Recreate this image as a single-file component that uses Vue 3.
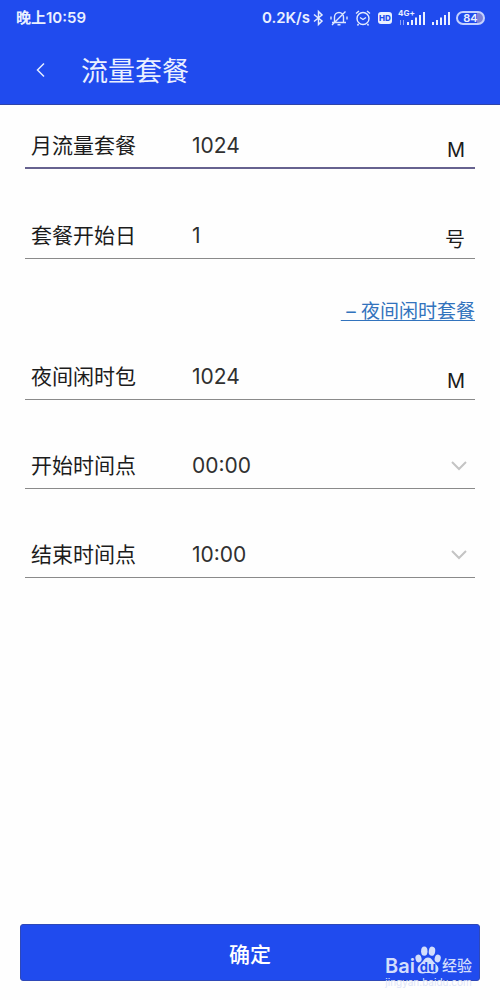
<script setup>
import { ref } from 'vue'

const monthly = ref('1024')
const startDay = ref('1')
const night = ref('1024')
const startTime = ref('00:00')
const endTime = ref('10:00')
const times = Array.from({ length: 24 }, (_, h) => `${String(h).padStart(2, '0')}:00`)
</script>

<template>
  <div class="page">
    <header class="top">
      <div class="status">
        <span class="clock">晚上10:59</span>
        <span class="speed">0.2K/s</span>
        <svg class="bt" width="11" height="18" viewBox="0 0 11 18" fill="none" stroke="#e4ecff" stroke-width="1.5">
          <path d="M1 5.500 9 12 5.500 15.500V2.500L9 6 1 12.500" />
        </svg>
        <svg class="mute" width="18" height="18" viewBox="0 0 18 18" fill="none" stroke="#dce6ff" stroke-width="1.4">
          <path d="M4.500 13V8a4.500 4.500 0 0 1 9 0v5M2 13.500h14M7.500 15.800h3M2 16 15.500 2.500M1 7.500v3M17 7.500v3" />
        </svg>
        <svg class="alarm" width="16" height="18" viewBox="0 0 16 18" fill="none" stroke="#e4ecff" stroke-width="1.4">
          <circle cx="8" cy="9.500" r="6" />
          <path d="M5 8.500 8 10.500 11 8.500M1 4.500 4 2M15 4.500 12 2M3.500 15 2.500 16.500M12.500 15 13.500 16.500" />
        </svg>
        <span class="hd">HD</span>
        <span class="net">
          <span class="gen">4G+</span>
          <svg width="28" height="18" viewBox="0 0 28 18" fill="#eaf0ff">
            <path d="M9 13h2v3H9zM13 11h2v5h-2zM17 8.500h2V16h-2zM21 6h2v10h-2zM25 3h2v13h-2z" />
            <path d="M2 11h1v5H2zM5 11h1v5H5z" opacity=".55" />
          </svg>
        </span>
        <svg class="sig" width="19" height="18" viewBox="0 0 19 18" fill="#eaf0ff">
          <path d="M0 13h2v3H0zM4 11h2v5H4zM8 8.500h2V16H8zM12 6h2v10h-2zM16 3h2v13h-2z" />
        </svg>
        <span class="battery"><b>84</b></span>
      </div>
      <div class="bar">
        <button class="back" type="button" aria-label="返回">
          <svg width="12" height="16" viewBox="0 0 12 16" fill="none" stroke="#e4ecff" stroke-width="1.500">
            <path d="M9 1.500 2.500 8 9 14.500" />
          </svg>
        </button>
        <h1>流量套餐</h1>
      </div>
    </header>

    <main class="form">
      <div class="row active">
        <label for="monthly">月流量套餐</label>
        <input id="monthly" v-model="monthly" type="text" />
        <span class="unit">M</span>
      </div>
      <div class="row">
        <label for="day">套餐开始日</label>
        <input id="day" v-model="startDay" type="text" />
        <span class="unit">号</span>
      </div>
      <div class="toggle"><a href="#">&nbsp;– 夜间闲时套餐</a></div>
      <div class="row">
        <label for="night">夜间闲时包</label>
        <input id="night" v-model="night" type="text" />
        <span class="unit">M</span>
      </div>
      <div class="row">
        <label for="start">开始时间点</label>
        <select id="start" v-model="startTime">
          <option v-for="t in times" :key="t">{{ t }}</option>
        </select>
        <svg class="chevron" width="16" height="10" viewBox="0 0 16 10"><path d="M1 1 8 8 15 1" /></svg>
      </div>
      <div class="row">
        <label for="end">结束时间点</label>
        <select id="end" v-model="endTime">
          <option v-for="t in times" :key="t">{{ t }}</option>
        </select>
        <svg class="chevron" width="16" height="10" viewBox="0 0 16 10"><path d="M1 1 8 8 15 1" /></svg>
      </div>
    </main>

    <footer class="foot">
      <button class="ok" type="button">确定</button>
      <div class="mark">
        <div class="brand">
          <span class="bai">Bai</span>
          <span class="paw">
            <svg width="26" height="28" viewBox="0 0 26 28" fill="#d3defc">
              <ellipse cx="3.500" cy="12.500" rx="3" ry="4" transform="rotate(-15 3.500 12.500)" />
              <ellipse cx="9.300" cy="5.200" rx="3.200" ry="4.600" />
              <ellipse cx="17" cy="5.200" rx="3.200" ry="4.600" transform="rotate(8 17 5.200)" />
              <ellipse cx="22.700" cy="12.500" rx="3" ry="4" transform="rotate(15 22.700 12.500)" />
              <path d="M13 11.500c3.500 0 4.500 3.500 7 5.700 2.500 2.300 4 4.300 3.300 7-.6 2.600-3 3.500-5.500 3.200-3.300-.5-6.300-.5-9.600 0-2.600.3-4.900-.6-5.500-3.200-.6-2.700.8-4.700 3.300-7 2.500-2.200 3.500-5.700 7-5.700z" />
            </svg>
            <b>du</b>
          </span>
          <span class="jy">经验</span>
        </div>
        <div class="site">jingyan.baidu.com</div>
      </div>
    </footer>
  </div>
</template>

<style>
body {
  margin: 0;
  background: #fefefe;
}
</style>

<style scoped>
.page {
  min-height: 100vh;
  display: flex;
  flex-direction: column;
  background: #fefefe;
  color: #1c1c1c;
  font-family: Inter, "Noto Sans CJK SC", sans-serif;
  font-size: 21px;
}
.page * {
  box-sizing: border-box;
}
.top {
  height: 105px;
  background: #204bee;
  border-bottom: 1px solid #2e44a8;
  color: #eaf0ff;
}
.status {
  height: 36px;
  padding: 0 15px 0 16px;
  display: flex;
  align-items: center;
  font-size: 15px;
  line-height: 18px;
  font-weight: 600;
}
.clock {
  margin-right: auto;
}
.speed {
  margin-right: 3px;
}
.bt {
  margin-right: 6px;
}
.mute {
  margin-right: 7px;
}
.alarm {
  margin-right: 7px;
}
.hd {
  width: 14px;
  height: 12px;
  margin-right: 6px;
  border-radius: 3px;
  background: #eaf0ff;
  color: #204bee;
  font-size: 8px;
  line-height: 12px;
  font-weight: 800;
  text-align: center;
}
.net {
  position: relative;
  display: flex;
  margin-right: 6px;
}
.gen {
  position: absolute;
  left: 0;
  top: 0;
  font-size: 8px;
  line-height: 8px;
  font-weight: 700;
}
.sig {
  margin-right: 5px;
}
.battery {
  width: 29px;
  height: 14px;
  border: 2px solid #c3d1ff;
  border-radius: 7px;
  background: linear-gradient(90deg, #204bee 75%, #7d83d8 75%);
  font-size: 11px;
  line-height: 10px;
  text-align: center;
}
.battery b {
  display: block;
  font-weight: 600;
}
.bar {
  height: 68px;
  padding-left: 28px;
  display: flex;
  align-items: center;
}
.back {
  width: 26px;
  height: 40px;
  padding: 0;
  border: 0;
  background: none;
  display: flex;
  align-items: center;
  justify-content: center;
}
h1 {
  margin: 0 0 0 27px;
  padding-top: 4px;
  font-size: 27px;
  line-height: 40px;
  font-weight: 400;
}
.form {
  flex: 1;
  padding: 0 25px;
}
.row {
  height: 65px;
  margin-top: 24px;
  padding: 22px 10px 0 6px;
  border-bottom: 1px solid #8a8a8a;
  display: flex;
  align-items: flex-start;
}
.row:first-child {
  height: 64px;
  margin-top: 0;
  margin-bottom: 25px;
}
.row.active {
  padding-top: 21px;
  border-bottom: 2px solid #66628f;
}
label {
  width: 161px;
  flex: none;
  line-height: 40px;
}
input,
select {
  flex: 1;
  min-width: 0;
  height: 40px;
  padding: 0;
  border: 0;
  outline: 0;
  appearance: none;
  background: none;
  color: #303030;
  font-family: inherit;
  font-size: 21px;
  line-height: 40px;
}
.unit {
  padding-top: 4px;
  font-size: 20px;
  line-height: 40px;
}
.chevron {
  margin: 15px -2px 0 0;
  fill: none;
  stroke: #c4c4c4;
  stroke-width: 2;
}
.toggle {
  height: 76px;
  margin-bottom: -24px;
  padding-top: 33px;
  text-align: right;
  font-size: 19px;
  line-height: 40px;
}
.toggle a {
  color: #3273bd;
  text-decoration: underline;
  text-decoration-thickness: 1px;
  text-underline-offset: 2px;
}
.foot {
  position: relative;
  padding: 0 20px 19px;
}
.ok {
  display: block;
  width: 100%;
  height: 57px;
  border: 1px solid #2e48b8;
  border-radius: 3px;
  background: #204bee;
  color: #fff;
  font-family: inherit;
  font-size: 21px;
  font-weight: 500;
}
.mark {
  position: absolute;
  right: 28px;
  bottom: 12px;
  color: #d3defc;
}
.brand {
  display: flex;
  align-items: flex-end;
}
.bai {
  font-size: 20px;
  line-height: 20px;
  font-weight: 600;
}
.paw {
  position: relative;
  display: flex;
  margin-bottom: 2px;
}
.paw b {
  position: absolute;
  left: 0;
  right: 0;
  bottom: 0;
  color: #204bee;
  font-size: 13px;
  line-height: 14px;
  text-align: center;
}
.jy {
  margin-left: 1px;
  font-size: 15px;
  line-height: 20px;
  font-weight: 500;
}
.site {
  color: #dfe5f7;
  font-size: 10px;
  line-height: 12px;
  text-align: center;
}
</style>
